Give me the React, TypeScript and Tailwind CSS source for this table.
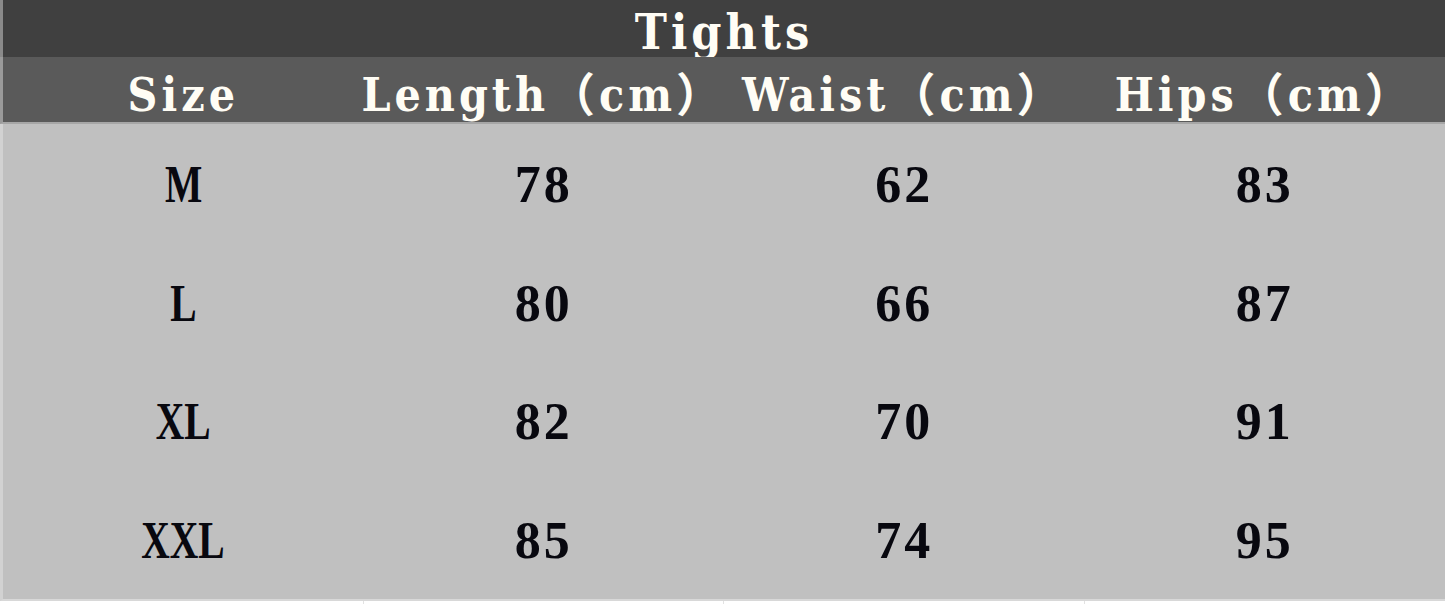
import React from 'react';

const columns = ['Size', 'Length（cm）', 'Waist（cm）', 'Hips（cm）'];

const rows = [
  ['M', '78', '62', '83'],
  ['L', '80', '66', '87'],
  ['XL', '82', '70', '91'],
  ['XXL', '85', '74', '95'],
];

const heading = { fontFamily: '"DejaVu Serif", "Liberation Serif", "Noto Sans CJK SC", serif' };
const serif = { fontFamily: '"Liberation Serif", serif' };

export default function App() {
  return (
    <div className="w-[1445px] h-[604px] bg-white flex flex-col overflow-hidden">
      {/* Title bar */}
      <div className="h-[57px] shrink-0 bg-[#404040] border-l-[3px] border-[#8a8a8a] flex justify-center pt-[8px]">
        <span style={heading} className="text-[48px] leading-none font-bold font-stretch-condensed tracking-[4px] text-[#fffdf5]">
          Tights
        </span>
      </div>

      {/* Column headings */}
      <div className="h-[67px] shrink-0 bg-[#5a5a5a] border-l-[3px] border-b-2 border-l-[#9a9a9a] border-b-[#a6a6a6] grid grid-cols-4">
        {columns.map((col) => (
          <div key={col} className="flex items-end justify-center pb-[4px]">
            <span style={heading} className="text-[46px] leading-none font-bold font-stretch-condensed tracking-[4px] text-[#fffdf5] whitespace-nowrap">
              {col}
            </span>
          </div>
        ))}
      </div>

      {/* Size values */}
      <div className="h-[477px] shrink-0 bg-[#c0c0c0] border-l-[3px] border-b-2 border-l-[#d2d2d2] border-b-[#d8d8d8] grid grid-cols-4 grid-rows-4">
        {rows.map((row) =>
          row.map((cell, i) => (
            <div key={row[0] + i} className="flex items-center justify-center pt-[3px]">
              <span
                style={serif}
                className={`text-[52px] leading-none font-bold text-[#08080f] ${
                  i === 0 ? 'inline-block scale-x-[0.76]' : 'tracking-[3px]'
                }`}
              >
                {cell}
              </span>
            </div>
          ))
        )}
      </div>

      {/* Bottom edge with faint column lines */}
      <div className="flex-1 grid grid-cols-4 pl-[3px]">
        <div className="border-r border-[#e2e2e2]" />
        <div className="border-r border-[#e2e2e2]" />
        <div className="border-r border-[#e2e2e2]" />
        <div />
      </div>
    </div>
  );
}
